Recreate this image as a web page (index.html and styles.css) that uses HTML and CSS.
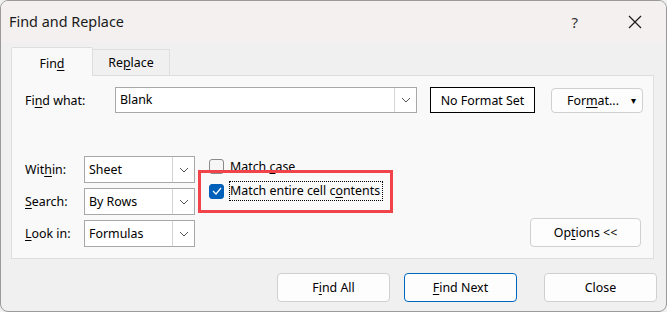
FILE: index.html
```html
<!DOCTYPE html>
<html lang="en">
<head>
  <meta charset="UTF-8" />
  <title>Find and Replace</title>
  <link rel="stylesheet" href="styles.css">
</head>
<body>
<div class="dialog">
  <div class="titlebar">
    <span class="title">Find and Replace</span>
    <span class="help">?</span>
    <svg class="close-x" width="14" height="14" viewBox="0 0 14 14"><path d="M1 1 L13 13 M13 1 L1 13" stroke="#1a1a1a" stroke-width="1.2" fill="none"/></svg>
  </div>

  <div class="tabs">
    <div class="tab active">Fin<u>d</u></div>
    <div class="tab">Re<u>p</u>lace</div>
  </div>

  <div class="panel">
    <div class="find-row">
      <span class="label-find">Fi<u>n</u>d what:</span>
      <div class="combo">
        <span class="combo-text">Blank</span>
        <span class="combo-arrow"><svg width="10" height="6" viewBox="0 0 10 6"><path d="M1 1 L5 5 L9 1" stroke="#555" fill="none"/></svg></span>
      </div>
      <div class="noformat">No Format Set</div>
      <div class="btn format-btn">For<u>m</u>at... <span class="caret">&#9662;</span></div>
    </div>

    <div class="lower">
      <div class="selects">
        <span class="label">Wit<u>h</u>in:</span>
        <div class="select"><span>Sheet</span><span class="sel-arrow"><svg width="10" height="6" viewBox="0 0 10 6"><path d="M1 1 L5 5 L9 1" stroke="#555" fill="none"/></svg></span></div>
        <span class="label"><u>S</u>earch:</span>
        <div class="select"><span>By Rows</span><span class="sel-arrow"><svg width="10" height="6" viewBox="0 0 10 6"><path d="M1 1 L5 5 L9 1" stroke="#555" fill="none"/></svg></span></div>
        <span class="label"><u>L</u>ook in:</span>
        <div class="select"><span>Formulas</span><span class="sel-arrow"><svg width="10" height="6" viewBox="0 0 10 6"><path d="M1 1 L5 5 L9 1" stroke="#555" fill="none"/></svg></span></div>
      </div>

      <div class="checks">
        <div class="check-row">
          <span class="box"></span>
          <span>Match <u>c</u>ase</span>
        </div>
        <div class="check-row marked">
          <span class="box checked"><svg width="10" height="8" viewBox="0 0 10 8"><path d="M1 4 L4 7 L9 1" stroke="#fff" stroke-width="1.2" fill="none"/></svg></span>
          <span class="focus">Match entire cell c<u>o</u>ntents</span>
        </div>
      </div>

      <div class="btn options-btn">Op<u>t</u>ions &lt;&lt;</div>
    </div>
  </div>

  <div class="footer">
    <div class="btn wide">F<u>i</u>nd All</div>
    <div class="btn wide primary"><u>F</u>ind Next</div>
    <div class="btn wide close-btn">Close</div>
  </div>
</div>
</body>
</html>
```

FILE: styles.css
```css
body { margin: 0; padding: 0; background: #f0f0f0; font-family: "Noto Sans", "Open Sans", sans-serif; font-size: 12.4px; color: #000; }
u { text-decoration-thickness: 1px; text-underline-offset: 2px; }

.dialog { width: 667px; height: 312px; box-sizing: border-box; border: 1px solid #9a9a9a; border-radius: 8px; background: #f0f0f0; overflow: hidden; }

.titlebar { height: 41px; background: #f3f0ef; display: flex; align-items: center; padding: 0 0 0 8px; }
.title { font-size: 14.4px; color: #1a1a1a; flex: 1; }
.help { font-size: 15px; color: #333; margin-right: 50px; }
.close-x { margin-right: 24px; }

.tabs { display: flex; padding: 9px 0 0 10px; height: 33px; box-sizing: border-box; align-items: flex-end; }
.tab { height: 26px; width: 77px; box-sizing: border-box; border: 1px solid #dedede; border-bottom: none; border-left: none; display: flex; align-items: center; justify-content: center; background: #f0f0f0; }
.tab.active { height: 29px; width: 82px; background: #f9f9f9; border-left: 1px solid #dedede; border-radius: 2px 2px 0 0; position: relative; top: 1px; padding-top: 2px; }

.panel { margin: 0 12px 0 10px; height: 184px; box-sizing: border-box; border: 1px solid #dedede; background: #f9f9f9; }

.find-row { display: flex; align-items: center; margin-top: 11px; padding-left: 13px; height: 26px; }
.label-find { width: 90px; }
.combo { width: 302px; height: 26px; box-sizing: border-box; border: 1px solid #a8a8a8; background: #fff; display: flex; }
.combo-text { flex: 1; padding-left: 4px; line-height: 24px; }
.combo-arrow { width: 21px; border-left: 1px solid #d4d4d4; display: flex; align-items: center; justify-content: center; }
.noformat { margin-left: 13px; width: 105px; height: 26px; box-sizing: border-box; border: 1px solid #000; background: #fff; display: flex; align-items: center; justify-content: center; }

.btn { box-sizing: border-box; border: 1px solid #d0d0d0; border-radius: 4px; background: #fdfdfd; display: flex; align-items: center; justify-content: center; }
.format-btn { margin-left: 16px; width: 92px; height: 25px; justify-content: flex-end; padding-right: 6px; }
.caret { font-size: 10px; margin-left: 12px; }

.lower { display: flex; margin-top: 43px; padding-left: 13px; }
.selects { display: grid; grid-template-columns: 59px 111px; grid-auto-rows: 27px; row-gap: 5px; align-items: center; }
.select { height: 27px; box-sizing: border-box; border: 1px solid #a8a8a8; background: #fff; display: flex; align-items: center; justify-content: space-between; padding-left: 4px; }
.sel-arrow { width: 21px; height: 100%; border-left: 1px solid #d4d4d4; display: flex; align-items: center; justify-content: center; }

.checks { margin-left: 14px; padding-top: 2px; }
.check-row { display: flex; align-items: center; gap: 6px; height: 16px; }
.check-row.marked { margin-top: 9px; position: relative; }
.check-row.marked::after { content: ""; position: absolute; left: -11px; top: -13px; width: 195px; height: 43px; box-sizing: border-box; border: 3px solid #f0444a; }
.box { width: 15px; height: 15px; box-sizing: border-box; border: 1px solid #8a8a8a; border-radius: 3px; background: #f6f6f6; }
.box.checked { background: #005fb8; border-color: #005fb8; display: flex; align-items: center; justify-content: center; }
.focus { outline: 1px dotted #000; padding: 0 2px 1px 0; }

.options-btn { margin-left: auto; margin-right: 12px; align-self: flex-end; width: 111px; height: 29px; }

.footer { display: flex; padding: 14px 0 0 276px; }
.wide { width: 113px; height: 29px; }
.primary { margin-left: 14px; border-color: #0067c0; }
.close-btn { margin-left: 27px; }
```
